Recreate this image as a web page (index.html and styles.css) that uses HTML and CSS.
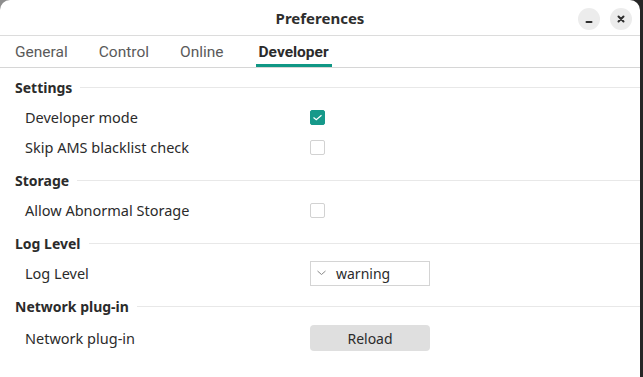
FILE: index.html
```html
<!DOCTYPE html><html><head><meta charset="utf-8">
<meta name="viewport" content="initial-scale=1.0, width=device-width">
<title>Preferences</title>
<link rel="stylesheet" href="styles.css">
</head>
<body>
<div class="window">
  <div class="titlebar">
    <span class="title">Preferences</span>
    <div class="winbtns">
      <span class="winbtn">
        <svg width="10" height="10" viewBox="0 0 10 10"><path d="M2.5 8 L7.5 8" /></svg>
      </span>
      <span class="winbtn">
        <svg width="10" height="10" viewBox="0 0 10 10"><path d="M2.5 2.5 L7.5 7.5 M7.5 2.5 L2.5 7.5" /></svg>
      </span>
    </div>
  </div>

  <div class="tabs">
    <span class="tab">General</span>
    <span class="tab">Control</span>
    <span class="tab">Online</span>
    <span class="tab active">Developer</span>
  </div>

  <div class="content">
    <div class="section">
      <div class="head">Settings</div>
      <div class="row">
        <span class="label">Developer mode</span>
        <span class="check on">
          <svg width="11" height="11" viewBox="0 0 11 11"><path d="M1.5 5.5 L4.3 7.8 L9.5 3.3" /></svg>
        </span>
      </div>
      <div class="row">
        <span class="label">Skip AMS blacklist check</span>
        <span class="check"></span>
      </div>
    </div>

    <div class="section">
      <div class="head">Storage</div>
      <div class="row">
        <span class="label">Allow Abnormal Storage</span>
        <span class="check"></span>
      </div>
    </div>

    <div class="section">
      <div class="head">Log Level</div>
      <div class="row">
        <span class="label">Log Level</span>
        <span class="combo">
          <svg width="9" height="6" viewBox="0 0 9 6"><path d="M0.5 1 L4.5 4.5 L8.5 1" /></svg>
          <span>warning</span>
        </span>
      </div>
    </div>

    <div class="section">
      <div class="head">Network plug-in</div>
      <div class="row tall">
        <span class="label">Network plug-in</span>
        <button type="button" class="btn">Reload</button>
      </div>
    </div>
  </div>
</div>
</body>
</html>
```

FILE: styles.css
```css
html,body{margin:0;padding:0;}
*{box-sizing:border-box;}
body{
  width:643px;
  height:377px;
  overflow:hidden;
  background:linear-gradient(90deg,#8e8e8e 0,#8e8e8e 50%,#262626 50%);
  font-family:"Noto Sans",Arial,sans-serif;
  font-size:14px;
  color:#2b2b2b;
}
.window{
  width:640px;
  height:377px;
  background:#fff;
  border-radius:10px 10px 0 0;
}
.titlebar{
  height:36px;
  display:flex;
  align-items:center;
  justify-content:center;
  position:relative;
  border-bottom:1px solid #dcdcdc;
}
.title{font-weight:bold;font-size:15px;color:#2e2e2e;margin-top:1px;}
.winbtns{
  position:absolute;
  right:8px;
  top:8px;
  display:flex;
  gap:10px;
}
.winbtn{
  width:22px;height:22px;
  border-radius:50%;
  background:#ececec;
  display:flex;align-items:center;justify-content:center;
}
.winbtn svg{stroke:#2e2e2e;stroke-width:2;fill:none;stroke-linecap:round;}
.tabs{
  height:32px;
  display:flex;
  align-items:flex-end;
  padding-left:15px;
  border-bottom:1px solid #d6d6d6;
}
.tab{
  color:#5a5a5a;
  font-family:Roboto,"Noto Sans",sans-serif;
  font-size:15.5px;
  line-height:18px;
  padding:0 0 3px;
  margin-right:31px;
  border-bottom:3px solid transparent;
}
.tab:nth-child(3){margin-right:32px;}
.tab.active{
  color:#2b2b2b;
  font-weight:bold;
  border-bottom-color:#109785;
  padding:0 3px 3px;
}
.content{padding-top:8px;}
.section{margin-bottom:7px;}
.head{
  height:22px;
  display:flex;
  align-items:center;
  padding-left:15px;
  font-weight:bold;
  margin-bottom:4px;
}
.head::after{
  content:"";
  flex:1;
  height:1px;
  background:#e8e8e8;
  margin-left:8px;
}
.row{
  height:30px;
  display:flex;
  align-items:center;
  padding-left:25px;
  font-size:14.5px;
}
.row.tall{height:34px;}
.label{width:285px;}
.check{
  width:15px;height:15px;
  border:1px solid #d2d2d2;
  border-radius:2px;
  display:flex;align-items:center;justify-content:center;
}
.check.on{background:#16998a;border-color:#16998a;}
.check svg{stroke:#fff;stroke-width:1.2;fill:none;}
.combo{
  width:120px;height:25px;
  border:1px solid #d4d4d4;
  display:flex;align-items:center;
  padding-left:6px;
  gap:10px;
  font-size:14px;
}
.combo svg{stroke:#888;stroke-width:1;fill:none;}
.btn{
  width:120px;height:26px;
  border:none;
  border-radius:4px;
  background:#dfdfdf;
  font-family:inherit;
  font-size:14px;
  color:#2b2b2b;
  padding:0;
}
```
